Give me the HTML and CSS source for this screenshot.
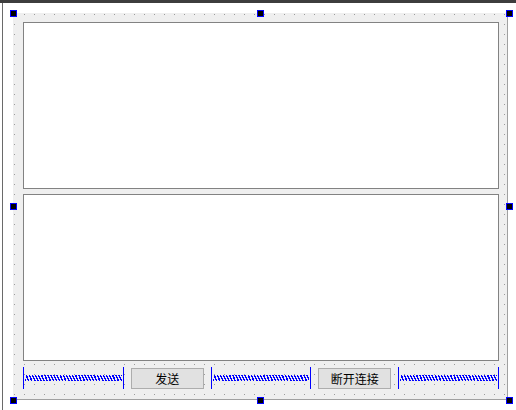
FILE: index.html
```html
<!DOCTYPE html>
<html lang="zh-CN">
<head>
    <meta charset="UTF-8">
    <title>Form</title>
    <link rel="stylesheet" href="styles.css">
</head>
<body>
    <div class="topbar"></div>
    <div class="workspace">
        <div class="edge"></div>
        <div class="form">
            <!-- received text -->
            <div class="text-edit"></div>
            <!-- text to send -->
            <div class="text-edit second"></div>

            <div class="button-row">
                <div class="spacer"></div>
                <button class="push">发送</button>
                <div class="spacer"></div>
                <button class="push">断开连接</button>
                <div class="spacer"></div>
            </div>

            <!-- selection handles -->
            <span class="handle h-left h-top"></span>
            <span class="handle h-mid h-top"></span>
            <span class="handle h-right h-top"></span>
            <span class="handle h-left h-center"></span>
            <span class="handle h-right h-center"></span>
            <span class="handle h-left h-bottom"></span>
            <span class="handle h-mid h-bottom"></span>
            <span class="handle h-right h-bottom"></span>
        </div>
    </div>
</body>
</html>
```

FILE: styles.css
```css
body {
    margin: 0;
    background-color: #fff;
    font-family: "Noto Sans CJK SC", "Liberation Sans", sans-serif;
    font-size: 12px;
}
.topbar {
    height: 3px;
    background-color: #3d3d3d;
}
.workspace {
    display: flex;
    height: 407px;
}
.edge {
    width: 1px;
    margin-left: 2px;
    background-color: #6a6a6a;
}
.form {
    position: relative;
    box-sizing: border-box;
    width: 495px;
    height: 387px;
    margin: 10px 0 0 10px;
    padding: 9px 8px 10px 10px;
    display: flex;
    flex-direction: column;
    border-right: 1px solid #a0a0a0;
    border-bottom: 1px solid #a0a0a0;
    background-color: #efefef;
    background-image:
        linear-gradient(90deg, #efefef 9px, transparent 9px),
        linear-gradient(#efefef 9px, #9c9c9c 9px);
    background-size: 10px 10px;
    background-position: 2px 2px;
}
.text-edit {
    box-sizing: border-box;
    height: 167px;
    border: 1px solid #828282;
    background-color: #fff;
}
.text-edit.second {
    margin-top: 5px;
}
.button-row {
    display: flex;
    align-items: flex-end;
    gap: 7px;
    height: 22px;
    margin-top: 6px;
}
.spacer {
    flex: 1;
    position: relative;
    box-sizing: border-box;
    height: 22px;
    border-left: 1px solid #0000ff;
    border-right: 1px solid #0000ff;
}
.spacer::before {
    content: "";
    position: absolute;
    left: 1px;
    right: 1px;
    top: 8px;
    height: 6px;
    background-image: repeating-linear-gradient(65deg, #0000ff 0 1.4px, transparent 1.4px 2.8px);
}
.push {
    box-sizing: border-box;
    width: 73px;
    height: 21px;
    padding: 0;
    border: 1px solid #adadad;
    border-radius: 0;
    background-color: #e1e1e1;
    color: #000;
    font-family: inherit;
    font-size: 12px;
    line-height: 19px;
}
.handle {
    position: absolute;
    box-sizing: border-box;
    width: 7px;
    height: 7px;
    border: 1px solid #0000ff;
    background-color: #000;
}
.h-left { left: -3px; }
.h-mid { left: 244px; }
.h-right { left: 493px; }
.h-top { top: -3px; }
.h-center { top: 190px; }
.h-bottom { top: 384px; }
```
